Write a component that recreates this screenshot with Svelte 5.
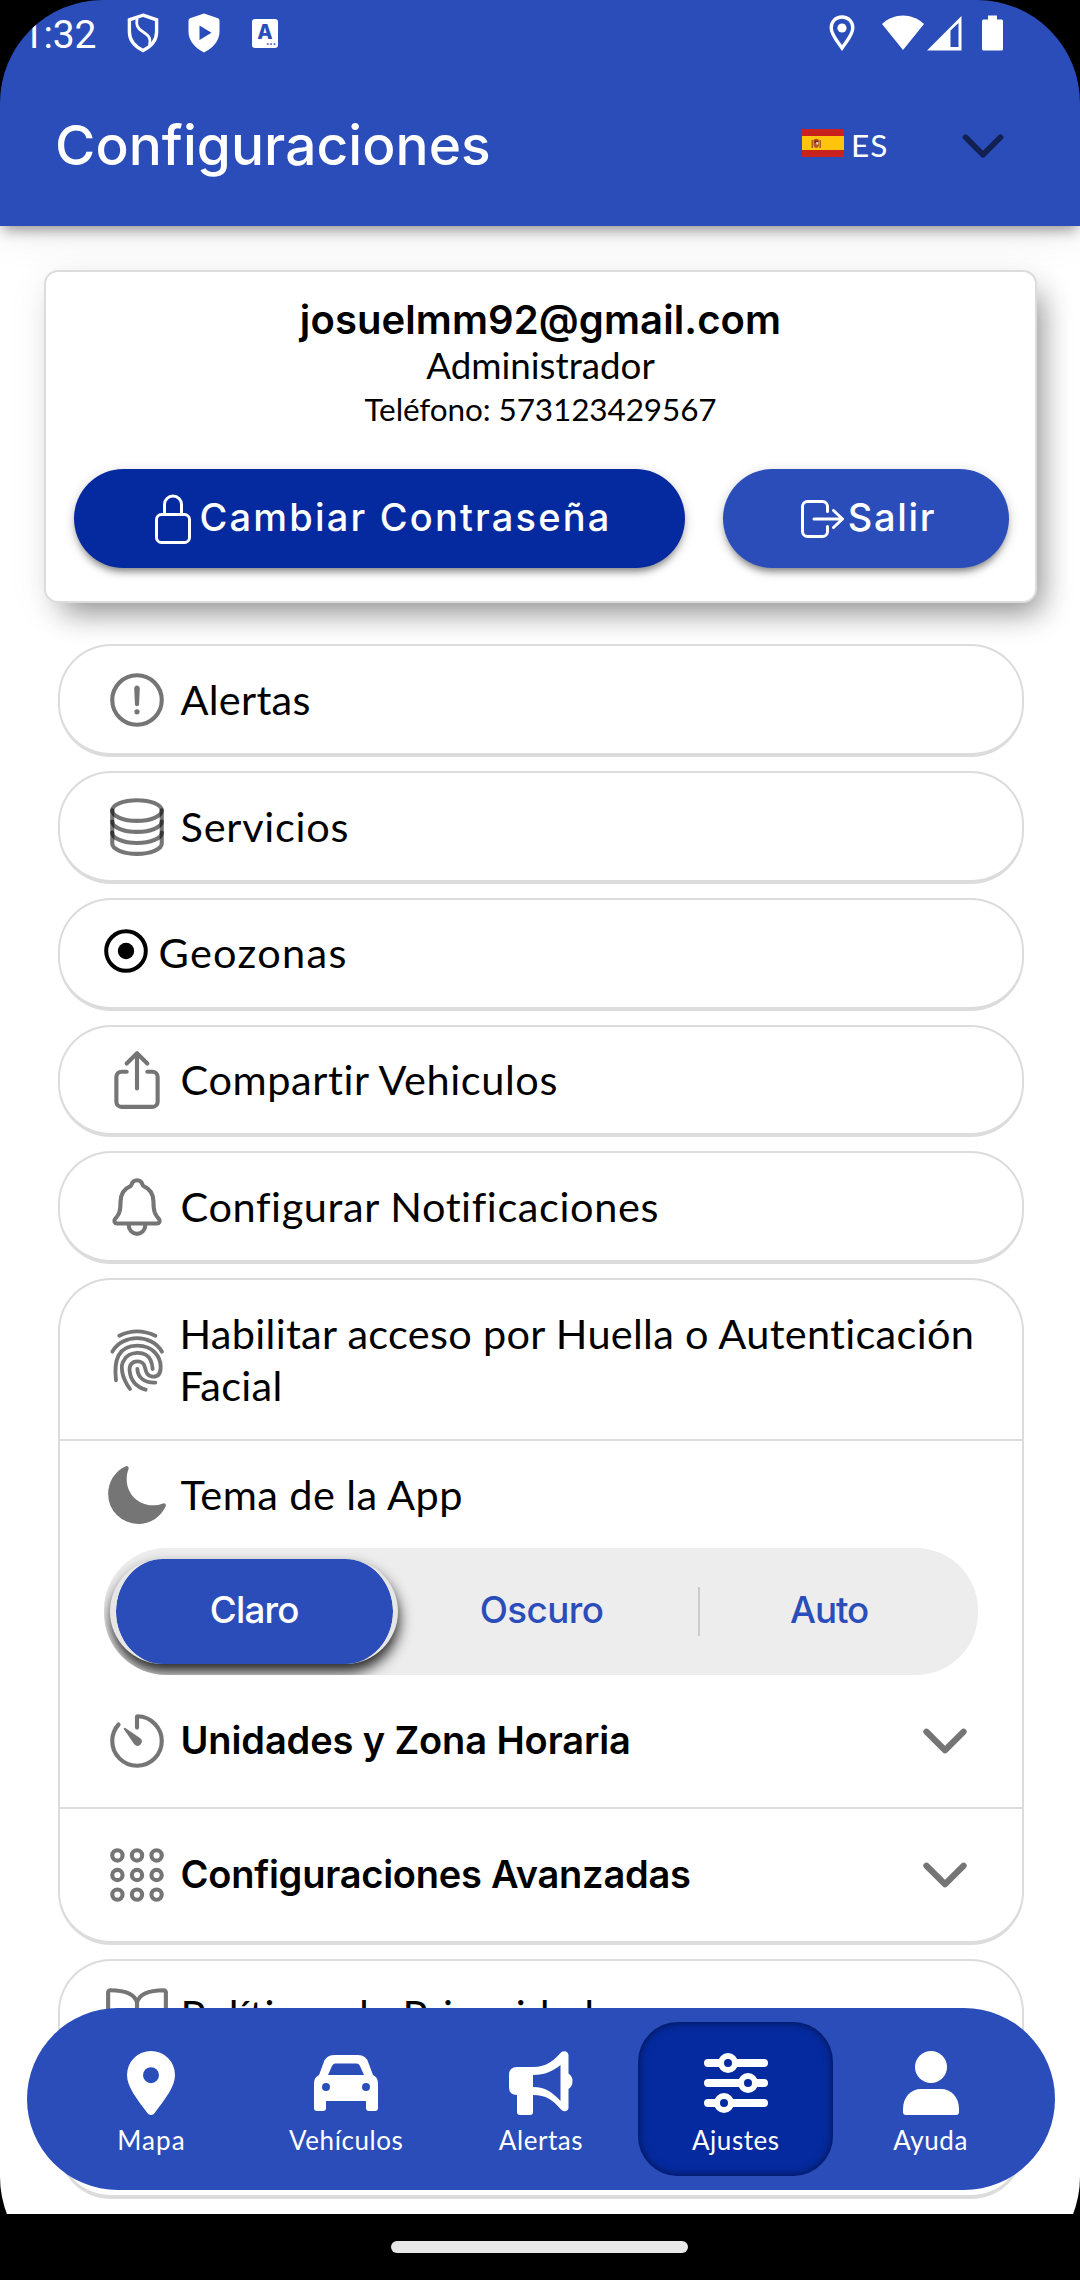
<script>
  const rows = [
    { key: 'alertas', label: 'Alertas' },
    { key: 'servicios', label: 'Servicios' },
    { key: 'geozonas', label: 'Geozonas' },
    { key: 'compartir', label: 'Compartir Vehiculos' },
    { key: 'notificaciones', label: 'Configurar Notificaciones' }
  ];
  const themes = [
    { key: 'claro', label: 'Claro' },
    { key: 'oscuro', label: 'Oscuro' },
    { key: 'auto', label: 'Auto' }
  ];
  const tabs = [
    { key: 'mapa', label: 'Mapa' },
    { key: 'vehiculos', label: 'Vehículos' },
    { key: 'avisos', label: 'Alertas' },
    { key: 'ajustes', label: 'Ajustes' },
    { key: 'ayuda', label: 'Ayuda' }
  ];
  const grid = [104, 256, 408];
  let theme = $state('claro');
  let tab = $state('ajustes');
</script>

{#snippet icon(name)}
  {#if name === 'geozonas'}
    <svg class="radio" viewBox="0 0 44 44">
      <circle cx="22" cy="22" r="19.8" fill="none" stroke="#000" stroke-width="4" />
      <circle cx="22" cy="22" r="8.2" />
    </svg>
  {:else if name === 'huella'}
    <svg class="icon" viewBox="42 50 198 198">
      <g class="line finger">
        <path d="M88 76Q141 50 196 76" />
        <path d="M67 124C98 70 184 70 216 124" />
        <path d="M78 210C71 150 84 106 142 106C190 106 212 140 212 170C212 189 204 199 190 199C172 198 168 186 165 172C162 158 156 153 142 153C126 153 117 165 119 182C122 212 140 230 167 238" />
        <path d="M120 236C94 200 90 165 102 150C114 122 168 118 182 150C186 158 187 166 188 176" />
        <path d="M142 176C144 201 162 218 196 217" />
      </g>
    </svg>
  {:else}
    <svg class="icon" viewBox="0 0 512 512">
      {#if name === 'alertas'}
        <g class="line">
          <circle cx="256" cy="256" r="192" />
          <path d="M250.3 166L256 288l5.7-122a5.7 5.7 0 0 0-5.8-6a5.7 5.7 0 0 0-5.6 6z" />
        </g>
        <circle class="solid" cx="256" cy="348" r="20" />
      {:else if name === 'servicios'}
        <g class="line translucent">
          <ellipse cx="256" cy="128" rx="192" ry="80" />
          <path d="M448 214c0 44.2-86 80-192 80S64 258.2 64 214" />
          <path d="M448 300c0 44.2-86 80-192 80S64 344.2 64 300" />
          <path d="M64 127.2v257.6C64 428.5 150 464 256 464s192-35.5 192-79.2V127.2" />
        </g>
      {:else if name === 'compartir'}
        <path class="line" d="M336 192h40a40 40 0 0 1 40 40v192a40 40 0 0 1-40 40H136a40 40 0 0 1-40-40V232a40 40 0 0 1 40-40h40M336 128l-80-80-80 80M256 321V48" />
      {:else if name === 'notificaciones'}
        <path class="line" d="M427.7 351.4C402 320 383.9 304 383.9 217.4 383.9 138 343.4 109.7 310 96c-4.4-1.8-8.6-6-10-10.6C294.2 65.5 277.8 48 256 48s-38.2 17.6-44 37.5c-1.4 4.6-5.5 8.7-10 10.5-33.4 13.8-73.9 41.9-73.9 121.4C128.1 304 110 320 84.3 351.4 73.7 364.5 83 384 101.6 384h308.9c18.5 0 27.8-19.6 17.2-32.6zM320 384v16a64 64 0 0 1-128 0v-16" />
      {:else if name === 'tema'}
        <path class="solid" d="M264 480A232 232 0 0 1 32 248c0-94 54-178.3 137.6-214.7a16 16 0 0 1 21.1 21.1C181.1 76.4 176 104.7 176 136c0 110.3 89.7 200 200 200 31.3 0 59.6-5.1 81.6-14.7a16 16 0 0 1 21.1 21.1C442.3 426 358 480 264 480z" />
      {:else if name === 'unidades'}
        <path class="line" d="M112.9 128A191.9 191.9 0 0 0 64 254c-1.2 106.4 85.7 193.8 192 194 106.2.2 192-85.8 192-192 0-104.5-83.6-189.6-187.5-192a4.4 4.4 0 0 0-4.5 4.4V152" />
        <path class="solid" d="M233.4 278.6l-79-113a8.1 8.1 0 0 1 11.3-11.3l113 79a32.5 32.5 0 0 1-37.2 53.3 33.2 33.2 0 0 1-8.1-8z" />
      {:else if name === 'avanzadas'}
        <g class="line">
          {#each grid as cy}
            {#each grid as cx}
              <circle {cx} {cy} r="40" />
            {/each}
          {/each}
        </g>
      {:else if name === 'politicas'}
        <path class="line" d="M256 160c16-63.2 76.4-95.4 208-96a16 16 0 0 1 16 16v288a16 16 0 0 1-16 16c-128 0-177.5 25.8-208 64-30.4-38-80-64-208-64-9.9 0-16-8-16-17.9V80a16 16 0 0 1 16-16c131.6.6 192 32.8 208 96zM256 160v288" />
      {:else if name === 'chevron'}
        <path class="line thick" d="M112 184l144 144 144-144" />
      {/if}
    </svg>
  {/if}
{/snippet}

<div class="phone">
  <header>
    <div class="status">
      <div class="status-left">
        <span class="clock">1:32</span>
        <svg width="32" height="40" viewBox="0 0 32 40" fill="none" stroke="#fff">
          <path stroke-width="3.4" d="M16 2.2L29.6 6.8V19C29.6 27 24 33.5 16 37.5C8 33.5 2.4 27 2.4 19V6.8Z" />
          <path stroke-width="2.8" d="M10 5.5C9 12 10 15 15.5 18.5C22 22.5 24 25 22.5 32" />
        </svg>
        <svg width="32" height="40" viewBox="0 0 32 40">
          <path fill="#fff" d="M16 .5L30 5.2Q31.5 6 31.5 8V19C31.5 28 24 35.5 16 39.5C8 35.5 .5 28 .5 19V8Q.5 6 2 5.2Z" />
          <path fill="#2a4dba" d="M11.5 12.5V27L23.5 19.7Z" />
        </svg>
        <span class="badge"><b>A</b><i>•••</i></span>
      </div>
      <div class="status-right">
        <svg class="gps" width="26" height="36" viewBox="0 0 26 36">
          <path fill="none" stroke="#fff" stroke-width="3.4" d="M13 2C6.5 2 2.2 6.8 2.2 12.8C2.2 20 9 27 13 33C17 27 23.8 20 23.8 12.8C23.8 6.8 19.5 2 13 2Z" />
          <circle cx="13" cy="13" r="4.6" fill="#fff" />
        </svg>
        <svg class="wifi" width="42" height="36" viewBox="0 0 42 36"><path fill="#fff" d="M0 9C12-2.5 30-2.5 42 9L21 35Z" /></svg>
        <svg class="signal" width="35" height="36" viewBox="0 0 35 36"><path fill="#fff" fill-rule="evenodd" d="M0 35.5L34.5 1V35.5ZM23.500 15.5V32H31.500V8Z" /></svg>
        <svg width="21" height="36" viewBox="0 0 21 36"><path fill="#fff" d="M6 .5H15V4.5H19.500Q21 4.5 21 6V34Q21 35.5 19.500 35.5H1.500Q0 35.5 0 34V6Q0 4.5 1.500 4.5H6Z" /></svg>
      </div>
    </div>
    <div class="toolbar">
      <h1>Configuraciones</h1>
      <div class="lang">
        <svg class="flag" width="42" height="28" viewBox="0 0 42 28">
          <path fill="#c9211e" d="M0 0H42V28H0Z" />
          <path fill="#ffc40c" d="M0 7H42V21H0Z" />
          <path fill="#ad5a1c" d="M9.5 11H11V19H9.500ZM17.500 11H19V19H17.500ZM11.500 11Q14.200 8.500 17 11V17Q14.200 21 11.500 17Z" />
          <path fill="#8c1515" d="M12.500 11.500H16V14H12.500Z" />
          <path fill="#ead9c8" d="M14.300 13H16.300V15.500H14.300Z" />
        </svg>
        <span>ES</span>
        {@render icon('chevron')}
      </div>
    </div>
  </header>

  <main>
    <section class="card">
      <h2>josuelmm92@gmail.com</h2>
      <p class="role">Administrador</p>
      <p class="phone-no">Teléfono: 573123429567</p>
      <div class="actions">
        <button class="primary">
          <svg width="36" height="50" viewBox="0 0 36 50" fill="none" stroke="#fff" stroke-width="3">
            <path d="M9.5 20V10.500a8.500 8.500 0 0 1 17 0V20" />
            <rect x="1.5" y="20.5" width="33" height="28" rx="5" />
          </svg>
          <span>Cambiar Contraseña</span>
        </button>
        <button class="exit">
          <svg width="43" height="38" viewBox="0 0 43 38" fill="none" stroke="#fff" stroke-width="3" stroke-linecap="round" stroke-linejoin="round">
            <path d="M26.5 11.5V6.500a5 5 0 0 0-5-5H6.500a5 5 0 0 0-5 5v25a5 5 0 0 0 5 5h15a5 5 0 0 0 5-5v-5M32.500 10.500l9 8.500-9 8.500M13 19h28" />
          </svg>
          <span>Salir</span>
        </button>
      </div>
    </section>

    <div class="list">
      {#each rows as row}
        <div class="box single">
          <div class="row {row.key}">
            {@render icon(row.key)}
            <span>{row.label}</span>
          </div>
        </div>
      {/each}

      <div class="box">
        <div class="row huella">
          {@render icon('huella')}
          <span>Habilitar acceso por Huella o Autenticación<br />Facial</span>
        </div>
        <div class="row tema">
          {@render icon('tema')}
          <span>Tema de la App</span>
        </div>
        <div class="segments">
          {#each themes as t}
            <button class="segment {t.key}" class:on={theme === t.key} onclick={() => (theme = t.key)}>{t.label}</button>
          {/each}
        </div>
        <div class="row strong unidades">
          {@render icon('unidades')}
          <span>Unidades y Zona Horaria</span>
          {@render icon('chevron')}
        </div>
        <div class="row strong avanzadas">
          {@render icon('avanzadas')}
          <span>Configuraciones Avanzadas</span>
          {@render icon('chevron')}
        </div>
      </div>

      <div class="box last">
        <div class="row politicas">
          {@render icon('politicas')}
          <span>Políticas de Privacidad</span>
        </div>
      </div>
    </div>
  </main>

  <nav>
    {#each tabs as t}
      <button class="tab {t.key}" class:active={tab === t.key} onclick={() => (tab = t.key)}>
        <svg width="64" height="64" viewBox="-32 -32 64 64" fill="#fff">
          {#if t.key === 'mapa'}
            <path fill-rule="evenodd" d="M0 32C-2 32-3 31-4 29.500C-14 16-24 4-24-8A24 24 0 0 1 24-8C24 4 14 16 4 29.500C3 31 2 32 0 32ZM0-15.800A8 8 0 1 0 0 .2A8 8 0 1 0 0-15.800Z" />
          {:else if t.key === 'vehiculos'}
            <path fill-rule="evenodd" d="M-12-28H12Q20-28 22.500-20L27-8Q32-5.500 32 0V25Q32 28 29 28H23Q20 28 20 25V18H-20V25Q-20 28-23 28H-29Q-32 28-32 25V0Q-32-5.500-27-8L-22.500-20Q-20-28-12-28ZM-11-19.500Q-13-19.500-14-17L-18-8H18L14-17Q13-19.500 11-19.500ZM-20 0A4 4 0 1 0-20 8A4 4 0 1 0-20 0ZM20 0A4 4 0 1 0 20 8A4 4 0 1 0 20 0Z" />
          {:else if t.key === 'avisos'}
            <path fill-rule="evenodd" d="M-24-16H-8C6-16 13-23 20-30.500Q22-32.500 25-31.500Q27.500-30.500 27.500-28V-9.500Q31.500-7 31.500-2Q31.500 3.500 27.500 6V25Q27.500 27.500 25 28Q22 29 20 26.500C12 17 5 12-8 12V29Q-8 32-11 32H-21Q-24 32-24 29V12Q-32 12-32 4V-8Q-32-16-24-16ZM-8-8V4C5 4 12 10 19.500 18V-18C12-12 4-8-8-8Z" />
          {:else if t.key === 'ajustes'}
            <path stroke="#fff" stroke-width="8" stroke-linecap="round" d="M-28-20H28M-28 0H28M-28 20H28" />
            <circle cx="-8" cy="-20" r="10" />
            <circle cx="12" cy="0" r="10" />
            <circle cx="-12" cy="20" r="10" />
            <g class="hole">
              <circle cx="-8" cy="-20" r="4" />
              <circle cx="12" cy="0" r="4" />
              <circle cx="-12" cy="20" r="4" />
            </g>
          {:else}
            <circle cx="0" cy="-16" r="16" />
            <path d="M-28 26C-28 14-20 6-10 6H10C20 6 28 14 28 26V29Q28 32 25 32H-25Q-28 32-28 29Z" />
          {/if}
        </svg>
        <span>{t.label}</span>
      </button>
    {/each}
  </nav>

  <div class="gesture"><div></div></div>
</div>

<style>
  :global(body) { margin: 0; background: #000; }
  * { box-sizing: border-box; margin: 0; }
  button { border: 0; padding: 0; background: none; color: inherit; font: inherit; }
  svg { display: block; flex: none; }

  .phone {
    position: relative;
    display: flex;
    flex-direction: column;
    width: 1080px;
    height: 2280px;
    overflow: hidden;
    border-radius: 103px;
    background: #000;
    color: #000;
    font-family: Lato, "Liberation Sans", sans-serif;
    white-space: nowrap;
  }

  header {
    z-index: 1;
    flex: none;
    height: 226px;
    background: #2a4dba;
    color: #fff;
    box-shadow: 0 7px 13px -3px rgba(0, 0, 0, .4), 0 12px 40px rgba(0, 0, 0, .06);
  }
  .status { display: flex; justify-content: space-between; height: 66px; padding: 0 77px 0 22px; }
  .status-left, .status-right { display: flex; align-items: center; }
  .clock { width: 105px; padding-top: 3px; font: 39px/66px Roboto, sans-serif; letter-spacing: -.3px; }
  .status-left svg + svg { margin: 0 32px 0 29px; }
  .badge { display: flex; flex-direction: column; width: 26px; height: 29px; border-radius: 3px; background: #fff; color: #2a4dba; }
  .badge b { height: 23px; font: 800 20px/26px Inter, sans-serif; text-align: center; }
  .badge i { padding-right: 2px; font: 6px/4px Inter, sans-serif; text-align: right; }
  .gps { margin-right: 27px; }
  .wifi { margin-right: 3px; }
  .signal { margin-right: 20px; }
  .toolbar { display: flex; align-items: center; justify-content: space-between; height: 160px; padding: 0 66px 0 55px; }
  h1 { padding-bottom: 3px; font: 500 55px/66px Inter, sans-serif; letter-spacing: .06px; }
  .lang { --icon: rgba(0, 0, 0, .56); display: flex; align-items: center; width: 212px; height: 64px; font-size: 31.5px; }
  .lang .flag { margin: -6px 7px 0 0; }
  .lang span { width: 100px; margin-top: -3px; letter-spacing: 1px; }
  .lang .icon { width: 62px; height: 62px; margin: 0 0 0 1px; }

  main { flex: 1; min-height: 0; padding: 44px 0 0; overflow: hidden; background: #fff; }

  .card {
    width: 993px;
    height: 333px;
    margin-left: 44px;
    padding: 24px 28px;
    border: 2px solid #dcdcdc;
    border-radius: 14px;
    background: #fff;
    text-align: center;
    box-shadow: 12px 17px 30px -8px rgba(0, 0, 0, .42), 0 6px 40px rgba(0, 0, 0, .07);
  }
  h2 { font: 600 40px/47px Inter, sans-serif; letter-spacing: .1px; }
  .role { font-size: 36.75px; line-height: 44px; letter-spacing: 0; }
  .phone-no { font-size: 31.5px; line-height: 44px; letter-spacing: -.1px; }
  .actions { display: flex; gap: 38px; margin-top: 38px; }
  .actions button {
    display: flex;
    flex: none;
    align-items: center;
    justify-content: center;
    height: 99px;
    border-radius: 50px;
    color: #fff;
    font: 500 38px/46px Inter, sans-serif;
    box-shadow: 0 6px 7px -3px rgba(0, 0, 0, .4), 0 3px 12px rgba(0, 0, 0, .2);
  }
  .actions span { padding-bottom: 4px; }
  .primary { width: 611px; gap: 8px; padding-left: 8px; background: #052a9f; letter-spacing: 2.2px; }
  .exit { width: 286px; gap: 4px; padding-left: 5px; background: #2a4dba; letter-spacing: 1.68px; }

  .list { display: flex; flex-direction: column; gap: 14px; width: 966px; margin: 41.3px 0 0 58px; }
  .box { flex: none; border: solid #dcdcdc; border-width: 2px 2px 4px; border-radius: 53px; background: #fff; }
  .single { height: 112.8px; }
  .last { height: 240px; }
  .row {
    --icon: #757575;
    display: flex;
    align-items: center;
    height: 107px;
    padding: 0 44px;
    font-size: 41.5px;
    line-height: 52px;
  }
  .row span { flex: 1; margin-left: 10.5px; padding-bottom: 2px; }
  .icon { width: 66px; height: 66px; }
  .radio { width: 44px; height: 44px; margin-top: -4px; }
  .line { fill: none; stroke: var(--icon); stroke-width: 32; stroke-linecap: round; stroke-linejoin: round; }
  .thick { stroke-width: 48; }
  .finger { stroke-width: 11.5; }
  .translucent { stroke: rgba(0, 0, 0, .54); }
  .solid { fill: var(--icon); }

  .alertas { letter-spacing: .28px; }
  .servicios { letter-spacing: .74px; }
  .geozonas { letter-spacing: 1.32px; }
  .compartir { letter-spacing: .58px; }
  .notificaciones { letter-spacing: .6px; }
  .huella { height: 161px; border-bottom: 2px solid #dcdcdc; letter-spacing: .29px; }
  .huella span { margin-left: 9.5px; margin-right: -20px; }
  .tema { letter-spacing: .4px; }
  .politicas { letter-spacing: .4px; }
  .strong { height: 132px; font: 600 38px/46px Inter, sans-serif; }
  .unidades { height: 134px; border-bottom: 2px solid #dcdcdc; letter-spacing: -.12px; }
  .avanzadas { letter-spacing: -.24px; }

  .segments {
    display: grid;
    grid-template-columns: repeat(3, 1fr);
    width: 874px;
    height: 127px;
    margin-left: 44px;
    padding: 11px 5px 11px 6px;
    overflow: hidden;
    border-radius: 62px;
    background: #ededed;
  }
  .segment {
    position: relative;
    padding-bottom: 4px;
    color: #2a4dba;
    font: 500 36.75px/44px Inter, sans-serif;
  }
  .segment.on {
    border: solid #e6e6e6;
    border-width: 0 5px 0 6px;
    border-radius: 55px;
    background: #2a4dba;
    background-clip: padding-box;
    color: #fff;
    box-shadow: 1px 8px 14px rgba(0, 0, 0, .85);
  }
  .claro { letter-spacing: -.77px; }
  .oscuro { letter-spacing: -.56px; }
  .auto { letter-spacing: -1.1px; }
  .auto::before { content: ''; position: absolute; left: 13px; top: 28px; width: 2px; height: 49px; background: #cbcbcb; }

  nav {
    position: absolute;
    z-index: 2;
    left: 27px;
    top: 2008px;
    display: flex;
    width: 1028px;
    height: 182px;
    padding: 14px 27px;
    border-radius: 91px;
    background: #2a4dba;
    color: #fff;
  }
  .tab { display: flex; flex: 1; flex-direction: column; align-items: center; padding-top: 29px; border-radius: 40px; font: 26px/32px Lato, sans-serif; letter-spacing: .56px; }
  .tab span { margin-top: 9px; }
  .tab.mapa { letter-spacing: 1.08px; }
  .active { background: #052a9f; box-shadow: inset 0 0 9px rgba(0, 0, 0, .6); }
  .hole { fill: #052a9f; }

  .gesture { z-index: 3; display: flex; flex: none; align-items: center; justify-content: center; height: 66px; padding-right: 2px; background: #000; }
  .gesture div { width: 297px; height: 12px; border-radius: 6px; background: #e8e8e8; }
</style>
